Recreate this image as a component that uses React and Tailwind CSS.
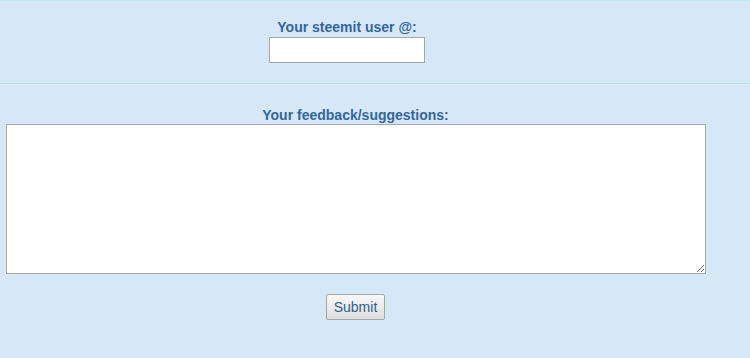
export default function App() {
  return (
    <div className="w-[750px] h-[358px] bg-[#d6e8f8] border-t border-[#c4e6f0] font-['Liberation_Sans',Arial,sans-serif] text-[#336699] overflow-hidden">
      <div className="w-[694px] flex flex-col items-center pt-[17px]">
        <div className="text-[14px] font-bold leading-[18px]">Your steemit user @:</div>
        <input
          type="text"
          className="mt-[1px] w-[156px] h-[26px] bg-white border border-[#a6a6a6] outline-none"
        />
      </div>
      <div className="mt-[19px] h-[3px] border-t border-[#dff0f4] bg-[#a9dbe3] border-b" style={{ borderBottomColor: "#dff0f6" }} />
      <div className="w-[711px] flex flex-col items-center pt-[21px]">
        <div className="text-[14px] font-bold leading-[18px]">Your feedback/suggestions:</div>
        <textarea className="block mt-0 w-[700px] h-[150px] bg-white border border-[#a6a6a6] outline-none resize" />
        <button className="mt-[20px] w-[59px] h-[26px] rounded-[2px] border border-[#a6a6a6] bg-gradient-to-b from-[#f8f8f8] to-[#dedede] text-[14px] text-[#2f5f8f] font-['Liberation_Sans',Arial,sans-serif]">
          Submit
        </button>
      </div>
    </div>
  );
}
